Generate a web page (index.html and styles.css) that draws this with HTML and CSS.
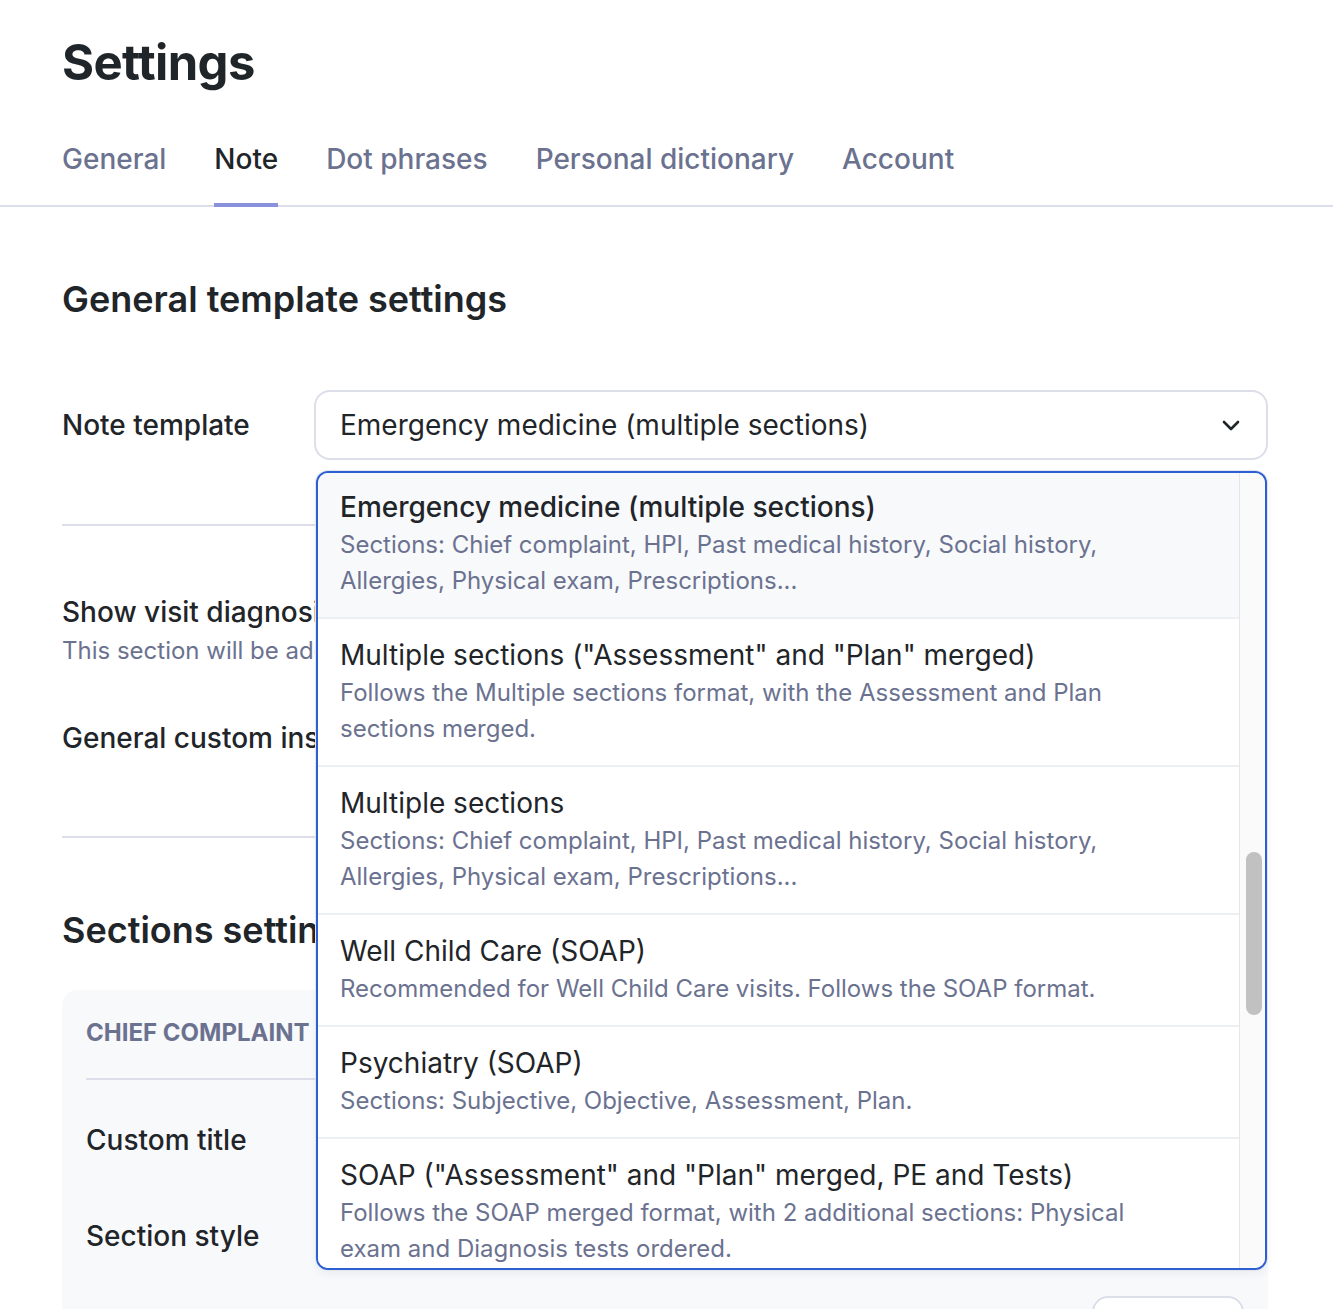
FILE: index.html
```html
<!DOCTYPE html>
<html lang="en">
<head>
<meta charset="utf-8">
<title>Settings</title>
<link rel="stylesheet" href="styles.css">
</head>
<body>
<div class="page">
  <header class="header">
    <h1 class="title">Settings</h1>
  </header>
  <nav class="tabs">
    <a class="tab">General</a>
    <a class="tab active">Note</a>
    <a class="tab">Dot phrases</a>
    <a class="tab">Personal dictionary</a>
    <a class="tab">Account</a>
  </nav>
  <main class="content">
    <h2 class="section-title">General template settings</h2>

    <div class="row row-template">
      <div class="label">Note template</div>
      <div class="select-wrap">
        <div class="select">
          <span class="select-value">Emergency medicine (multiple sections)</span>
          <svg class="chevron" width="18" height="11" viewBox="0 0 18 11" aria-hidden="true"><path d="M2 2 L9 9 L16 2" fill="none" stroke="#1f2529" stroke-width="2.6" stroke-linecap="round" stroke-linejoin="round"/></svg>
        </div>
        <div class="dropdown">
          <div class="options">
            <div class="option first selected">
              <div class="opt-title">Emergency medicine (multiple sections)</div>
              <div class="opt-desc">Sections: Chief complaint, HPI, Past medical history, Social history, Allergies, Physical exam, Prescriptions...</div>
            </div>
            <div class="option">
              <div class="opt-title">Multiple sections ("Assessment" and "Plan" merged)</div>
              <div class="opt-desc">Follows the Multiple sections format, with the Assessment and Plan sections merged.</div>
            </div>
            <div class="option">
              <div class="opt-title">Multiple sections</div>
              <div class="opt-desc">Sections: Chief complaint, HPI, Past medical history, Social history, Allergies, Physical exam, Prescriptions...</div>
            </div>
            <div class="option">
              <div class="opt-title">Well Child Care (SOAP)</div>
              <div class="opt-desc">Recommended for Well Child Care visits. Follows the SOAP format.</div>
            </div>
            <div class="option">
              <div class="opt-title">Psychiatry (SOAP)</div>
              <div class="opt-desc">Sections: Subjective, Objective, Assessment, Plan.</div>
            </div>
            <div class="option">
              <div class="opt-title">SOAP ("Assessment" and "Plan" merged, PE and Tests)</div>
              <div class="opt-desc">Follows the SOAP merged format, with 2 additional sections: Physical exam and Diagnosis tests ordered.</div>
            </div>
          </div>
          <div class="scroll-track"><div class="scroll-thumb"></div></div>
        </div>
      </div>
    </div>

    <hr class="divider">

    <div class="setting setting-diagnosis">
      <div class="label">Show visit diagnosis</div>
      <div class="hint">This section will be added at the end of the note</div>
    </div>
    <div class="setting setting-custom">
      <div class="label">General custom instructions</div>
    </div>

    <hr class="divider divider-2">

    <h2 class="section-title">Sections settings</h2>

    <section class="card">
      <div class="card-head">Chief complaint</div>
      <div class="card-row row-first"><div class="label">Custom title</div></div>
      <div class="card-row"><div class="label">Section style</div></div>
      <div class="card-actions"><div class="ghost-btn"></div></div>
    </section>
  </main>
</div>
</body>
</html>
```

FILE: styles.css
```css
html, body {
  margin: 0;
  padding: 0;
  background: #ffffff;
  overflow: hidden;
  height: 1309px;
}

body {
  font-family: Inter, "Noto Sans", "Liberation Sans", sans-serif;
  color: #1f2529;
}

.page {
  width: 1333px;
}

.header {
  padding: 34px 62px 0;
}

.title {
  margin: 0;
  font-size: 49px;
  line-height: 58px;
  font-weight: 700;
  letter-spacing: -0.6px;
  color: #1f2529;
}

.tabs {
  display: flex;
  gap: 48px;
  padding: 0 62px;
  margin-top: 50px;
  box-shadow: inset 0 -2px 0 #dcdfea;
}

.tab {
  font-size: 28px;
  line-height: 34px;
  font-weight: 500;
  color: #6b7290;
  padding-bottom: 27px;
  border-bottom: 4px solid transparent;
  cursor: pointer;
}

.tab.active {
  color: #1f2529;
  border-bottom-color: #8a91dc;
}

.content {
  padding: 0 65px 0 62px;
}

.section-title {
  margin: 70px 0 0;
  font-size: 36px;
  line-height: 44px;
  font-weight: 600;
  color: #1f2529;
}

.label {
  font-size: 28px;
  line-height: 36px;
  font-weight: 500;
  color: #1f2529;
}

.row-template {
  display: flex;
  align-items: center;
  margin-top: 69px;
}

.row-template .label {
  width: 252px;
  flex: none;
}

.select-wrap {
  position: relative;
  flex: 1;
}

.select {
  height: 70px;
  box-sizing: border-box;
  border: 2px solid #dcdfea;
  border-radius: 16px;
  display: flex;
  align-items: center;
  justify-content: space-between;
  padding: 0 26px 0 24px;
  background: #fff;
}

.select-value {
  font-size: 28px;
  line-height: 36px;
  color: #1f2529;
}

.chevron {
  display: block;
}

.dropdown {
  position: absolute;
  top: 81px;
  left: 2px;
  right: 1px;
  height: 799px;
  box-sizing: border-box;
  border: 2px solid #2d5fd3;
  border-radius: 12px;
  background: #fff;
  overflow: hidden;
  display: flex;
  box-shadow: 0 0 0 1px #e3e6ee, 0 4px 10px rgba(30, 40, 60, 0.06);
  z-index: 5;
}

.options {
  flex: 1;
  min-width: 0;
}

.option {
  padding: 16px 78px 18px 22px;
  border-top: 2px solid #edf0f3;
  background: #ffffff;
}

.option.first {
  padding-top: 14px;
  border-top: none;
}

.option.selected {
  background: #f8f9fb;
}

.opt-title {
  font-size: 28px;
  line-height: 40px;
  font-weight: 400;
  color: #1f2529;
}

.option.selected .opt-title {
  font-weight: 500;
}

.opt-desc {
  font-size: 24px;
  line-height: 36px;
  color: #6b7290;
}

.scroll-track {
  width: 26px;
  flex: none;
  background: #fafafa;
  border-left: 1px solid #e6e6e8;
  box-sizing: border-box;
  padding-left: 6px;
}

.scroll-thumb {
  width: 16px;
  height: 163px;
  margin-top: 379px;
  border-radius: 8px;
  background: #c1c1c1;
}

.divider {
  border: none;
  height: 2px;
  background: #dcdfea;
  margin: 64px 0 0;
}

.setting-diagnosis {
  margin-top: 68px;
}

.hint {
  margin-top: 3px;
  font-size: 24px;
  line-height: 36px;
  color: #6b7290;
}

.setting-custom {
  margin-top: 51px;
}

.divider-2 {
  margin-top: 80px;
}

.card {
  margin-top: 38px;
  background: #f8f9fb;
  border-radius: 16px;
  padding: 25px 24px 40px;
}

.card-head {
  font-size: 24px;
  line-height: 36px;
  font-weight: 700;
  text-transform: uppercase;
  color: #6b7290;
  padding-bottom: 27px;
  border-bottom: 2px solid #dcdfea;
}

.card-row {
  min-height: 70px;
  display: flex;
  align-items: center;
  margin-top: 26px;
}

.card-row.row-first {
  margin-top: 25px;
}

.card-actions {
  display: flex;
  justify-content: flex-end;
  margin-top: 25px;
}

.ghost-btn {
  width: 152px;
  height: 60px;
  box-sizing: border-box;
  border: 2px solid #dcdfea;
  border-radius: 16px;
  background: #fff;
}
```
